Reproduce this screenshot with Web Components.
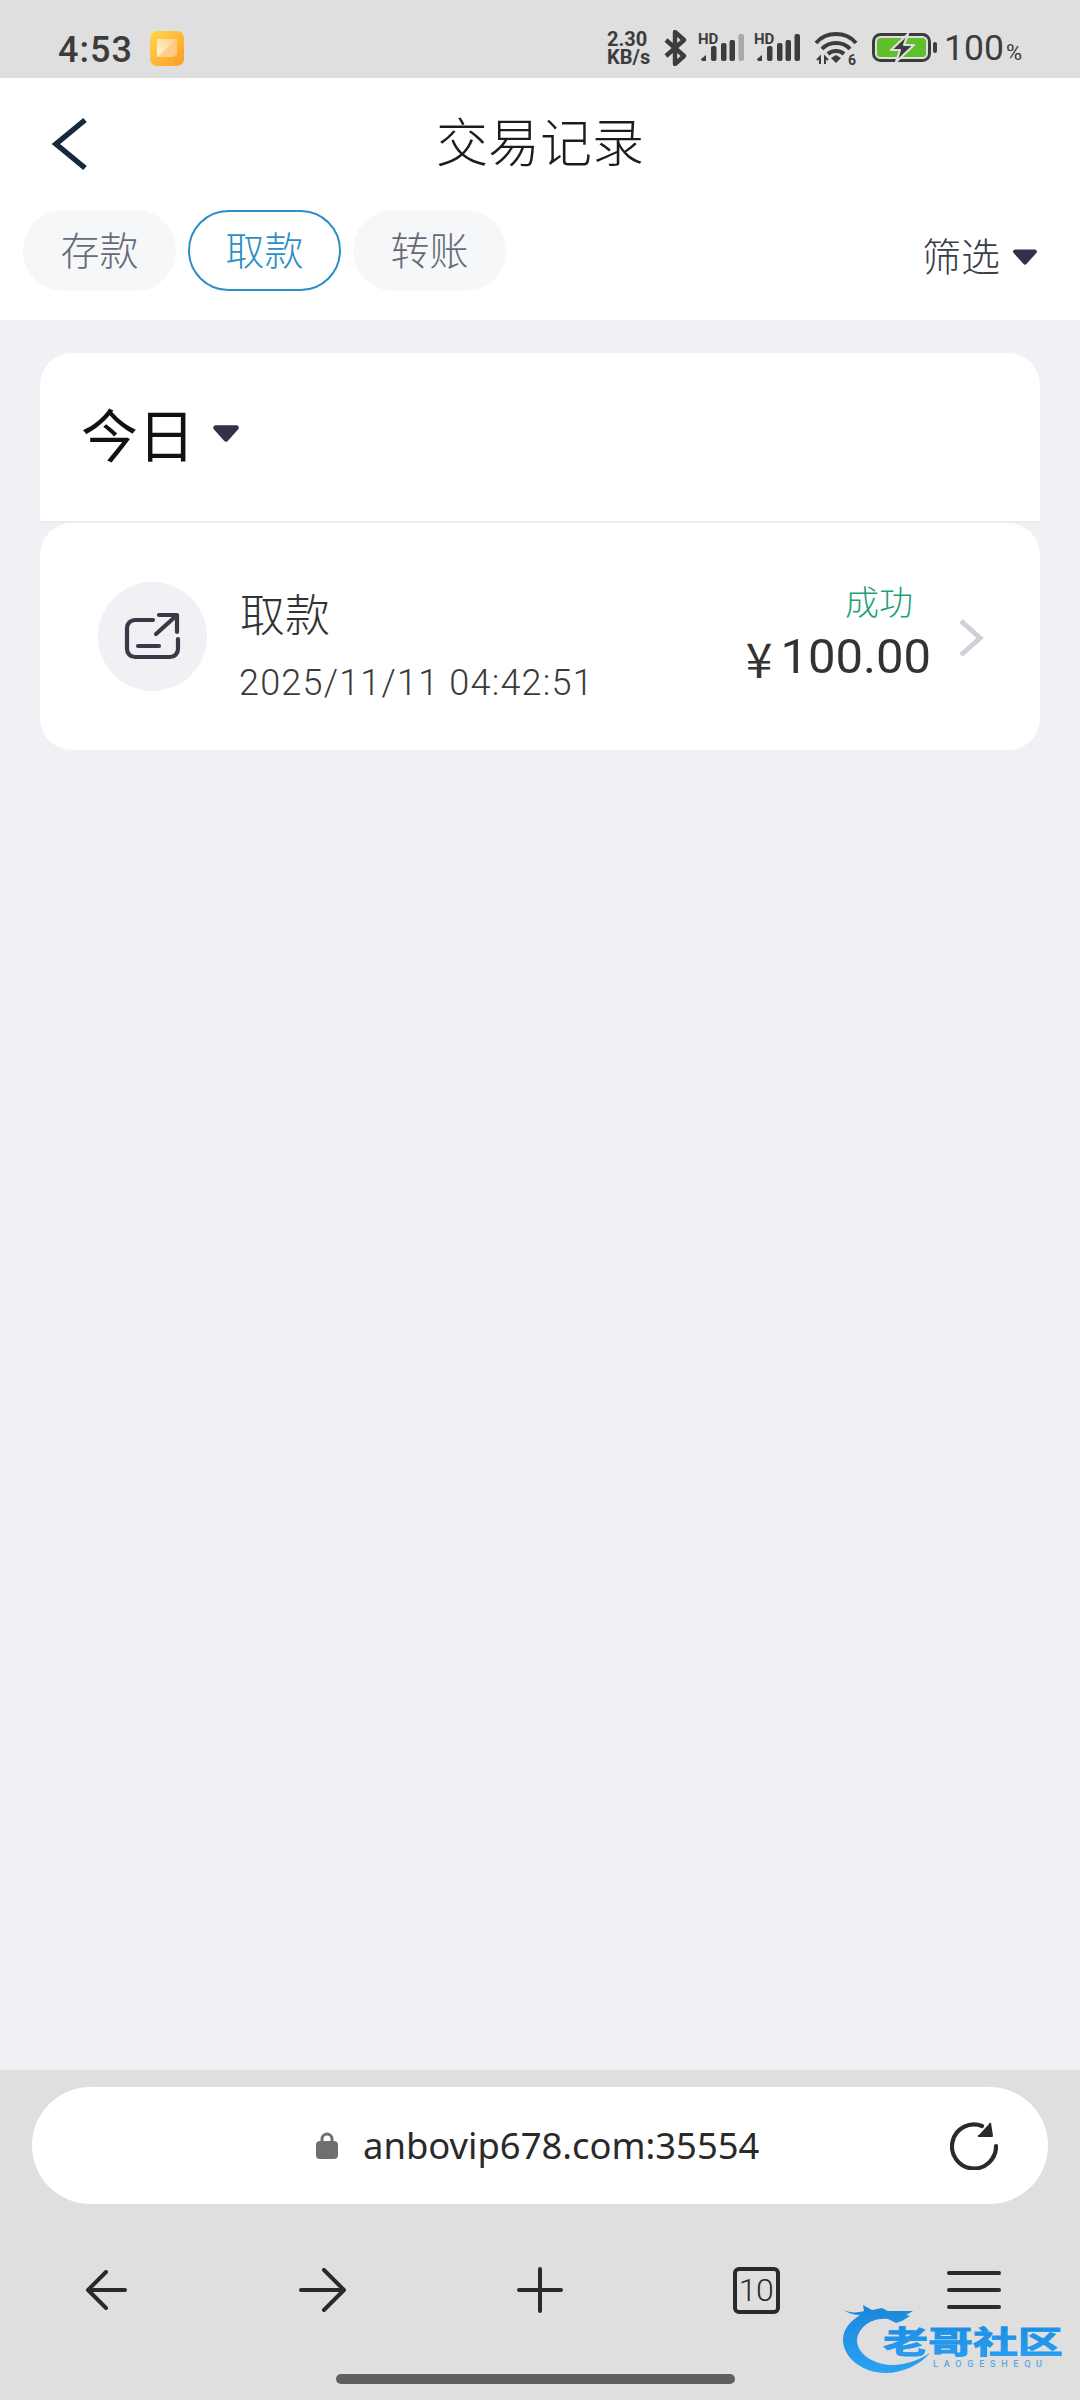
<!doctype html>
<html lang="zh"><head><meta charset="utf-8"><style>
html,body{margin:0;padding:0;background:#f0f0f5}
body{font-family:"Noto Sans CJK SC","Noto Sans",sans-serif}
x-app{display:flex;flex-direction:column;width:1080px;height:2400px;overflow:hidden}
</style></head><body>
<x-app>
  <x-status-bar></x-status-bar>
  <x-title-bar>交易记录</x-title-bar>
  <x-tabs>
    <x-pill>存款</x-pill><x-pill active>取款</x-pill><x-pill>转账</x-pill>
    <x-filter slot="end">筛选</x-filter>
  </x-tabs>
  <x-main>
    <x-day-head>今日</x-day-head>
    <x-txn-row title="取款" date="2025/11/11 04:42:51" status="成功" amount="100.00"></x-txn-row>
  </x-main>
  <x-browser-bar url="anbovip678.com:35554" tabs="10"></x-browser-bar>
</x-app>
<script>
const CJK='"Noto Sans CJK SC","Noto Sans",sans-serif';
const caret=(w,h,c)=>`<svg width="${w}" height="${h}" viewBox="0 0 24 16" style="display:block"><path d="M3 3H21L12 13Z" fill="${c}" stroke="${c}" stroke-width="4" stroke-linejoin="round"/></svg>`;
function el(name,render){customElements.define(name,class extends HTMLElement{
  constructor(){super();const s=this.attachShadow({mode:'open'});s.innerHTML=render(this)}
})}
const signal=(last)=>`<svg width="50" height="34" viewBox="0 0 50 34" style="display:block;overflow:visible">
<text x="3" y="13" font-family="Roboto" font-weight="700" font-size="15" fill="#3c3c3c">HD</text>
<g fill="#3c3c3c"><path d="M6 28L11 24V30H8A2 2 0 0 1 6 28Z"/><rect x="16" y="15" width="5.5" height="15" rx="2"/><rect x="26" y="12" width="5.5" height="18" rx="2"/><rect x="34.500" y="9" width="5.5" height="21" rx="2"/>
<rect x="43.500" y="3" width="5.5" height="27" rx="2" fill="${last}"/></g></svg>`;

el('x-status-bar',()=>`<style>
:host{display:flex;align-items:center;height:78px;background:#dfdfdf;color:#3c3c3c;flex:none;padding:0 58px;font-family:Roboto,sans-serif;box-sizing:border-box}
.time{font-size:36px;font-weight:500;letter-spacing:1px;margin-top:21px;line-height:40px}
.note{margin:19px 0 0 17px}
.r{margin-left:auto;display:flex;align-items:center;margin-top:18px;height:40px}
.sp{display:flex;flex-direction:column;font-size:20px;font-weight:700;line-height:18px;width:50px;margin-right:7px}
.bt{margin-right:7px}.sg1{margin-right:6px}.sg2{margin-right:13px}.wf{margin-right:14px}.bat{margin-right:7px}
.p{font-size:35.5px;line-height:40px}.pc{font-size:22px;margin:9px 0 0 2px}
</style>
<span class="time">4:53</span>
<svg class="note" width="34" height="35" viewBox="0 0 34 35"><defs><linearGradient id="n" x1="0" y1="0" x2="1" y2="1"><stop offset="0" stop-color="#ffd84a"/><stop offset="1" stop-color="#ff9a26"/></linearGradient><linearGradient id="m" x1="0" y1="1" x2="1" y2="0"><stop offset="0" stop-color="#fff6dc"/><stop offset="1" stop-color="#ffd08a"/></linearGradient></defs><rect width="34" height="35" rx="7" fill="url(#n)"/><path d="M7 8H27V23L22 26H7Z" fill="url(#m)"/><path d="M7 26L27 8V23L22 26Z" fill="#ffc36f" opacity=".7"/></svg>
<div class="r">
<div class="sp"><span>2.30</span><span>KB/s</span></div>
<svg class="bt" width="24" height="36" viewBox="0 0 24 36"><path d="M2 10L20 26L11 34V2L20 10L2 26" fill="none" stroke="#3c3c3c" stroke-width="4.4" stroke-linejoin="round"/></svg>
<span class="sg1">${signal('#a9a9a9')}</span>
<span class="sg2">${signal('#3c3c3c')}</span>
<svg class="wf" width="44" height="34" viewBox="0 0 44 34" style="overflow:visible"><g fill="none" stroke="#3c3c3c" stroke-width="4"><path d="M2 12C12 0 32 0 42 12"/><path d="M8 18C15 10 29 10 36 18"/><path d="M14 23C18 19 26 19 30 23"/></g><path d="M17 27L22 24L27 27L22 32Z" fill="#3c3c3c"/><path d="M3 29L6 26V33M11 33V26L14 29" fill="none" stroke="#3c3c3c" stroke-width="2"/><text x="34" y="33.500" font-family="Roboto" font-weight="700" font-size="14" fill="#3c3c3c">6</text></svg>
<svg class="bat" width="65" height="30" viewBox="0 0 65 30"><rect x="1.5" y="1.5" width="56" height="26" rx="7" fill="none" stroke="#3c3c3c" stroke-width="3"/><rect x="5" y="5" width="49" height="19" rx="3.5" fill="#5fc02c"/><rect x="61" y="9" width="4" height="11" rx="2" fill="#3c3c3c"/><path d="M36 1L19 17H28L24 29L42 12H32Z" fill="#3c3c3c" stroke="#dfdfdf" stroke-width="2.2" stroke-linejoin="round"/></svg>
<span class="p">100</span><span class="pc">%</span>
</div>`);

el('x-title-bar',()=>`<style>
:host{display:flex;align-items:center;justify-content:center;height:132px;background:#fff;flex:none;position:relative;font:300 52px/60px ${CJK};color:#1c1c1c;padding-bottom:8px;box-sizing:border-box}
svg{position:absolute;left:51px;top:39px}
</style><svg width="38" height="54" viewBox="0 0 38 54"><path d="M34 3L5 27L34 51" fill="none" stroke="#17293a" stroke-width="5.5"/></svg><slot></slot>`);

el('x-tabs',()=>`<style>
:host{display:flex;flex:none;background:#fff;padding:0 42px 29px 23px;height:110px;box-sizing:border-box;gap:12px}
.e{margin-left:auto;display:flex}
</style><slot></slot><div class="e"><slot name="end"></slot></div>`);

el('x-pill',h=>`<style>
:host{display:flex;align-items:center;justify-content:center;width:153px;height:81px;box-sizing:border-box;border-radius:41px;font:300 39px/1 ${CJK};padding-bottom:5px;
 background:${h.hasAttribute('active')?'#fff':'#f6f7f9'};color:${h.hasAttribute('active')?'#2b8fc6':'#666a78'};${h.hasAttribute('active')?'border:2.5px solid #2b8fc6;':''}}
</style><slot></slot>`);

el('x-filter',()=>`<style>
:host{display:flex;align-items:center;gap:12px;height:81px;padding-top:8px;box-sizing:border-box;font:300 39px/1 ${CJK};color:#3a3d4a}
svg{margin-top:4px}
</style><slot></slot>${caret(26,18,'#30334a')}`);

el('x-main',()=>`<style>
:host{display:flex;flex-direction:column;flex:1;background:#f0f0f5;padding:33px 40px 0;gap:0}
</style><slot></slot>`);

el('x-day-head',()=>`<style>
:host{display:flex;align-items:center;gap:17px;height:170px;box-sizing:border-box;background:#fff;border-radius:32px 32px 0 0;border-bottom:2px solid #ececf0;padding:0 0 10px 41px;font:400 57px/60px ${CJK};color:#111}
svg{margin-top:2px}
</style><slot></slot>${caret(28,19,'#30334a')}`);

el('x-txn-row',h=>{const a=n=>h.getAttribute(n);return `<style>
:host{display:flex;align-items:center;height:227px;box-sizing:border-box;background:#fff;border-radius:32px;padding:0 56px 0 58px}
.ic{width:109px;height:109px;border-radius:50%;background:#f0f0f5;display:flex;align-items:center;justify-content:center;flex:none}
.t{margin-left:32px;display:flex;flex-direction:column;padding-top:17px}
.n{font:300 45px/52px ${CJK};color:#333;margin-left:1px}
.d{font:300 36px/42px Roboto,sans-serif;color:#3a3a3a;margin-top:23px;letter-spacing:1.2px}
.a{margin-left:auto;display:flex;flex-direction:column;align-items:flex-end;margin-top:-7px}
.s{font:300 34px/40px ${CJK};color:#1f9f78;margin-right:18px}
.m{font:400 49px/58px Roboto,sans-serif;color:#333;margin-top:7px;display:flex;align-items:center}
.y{font:400 48px/58px ${CJK};margin-right:8px}
.c{margin-left:27px;flex:none;margin-top:2px}
</style>
<div class="ic"><svg width="57" height="49" viewBox="0 0 57 49"><g fill="none" stroke="#383b47" stroke-width="4.2" stroke-linecap="round" stroke-linejoin="round"><path d="M29 8H11A8 8 0 0 0 3 16V37A8 8 0 0 0 11 45H46A8 8 0 0 0 54 37V27"/><path d="M14 34H35"/><path d="M32 22L52 4"/><path d="M35 3H53V20"/></g></svg></div>
<div class="t"><span class="n">${a('title')}</span><span class="d">${a('date')}</span></div>
<div class="a"><span class="s">${a('status')}</span><span class="m"><span class="y">¥</span>${a('amount')}</span></div>
<svg class="c" width="26" height="40" viewBox="0 0 26 40"><path d="M3 3L22 20L3 37" fill="none" stroke="#cfd0d8" stroke-width="5"/></svg>`});

el('x-browser-bar',h=>`<style>
:host{display:flex;flex-direction:column;height:330px;flex:none;background:#dfdfdf;padding-top:17px;box-sizing:border-box;position:relative;color:#2a2a2a}
.u{display:flex;align-items:center;height:117px;margin:0 32px;background:#fff;border-radius:59px;padding:0 50px 0 284px;font:400 36.4px/44px "Noto Sans",sans-serif;flex:none}
.u span{margin-left:25px;padding-bottom:2px;white-space:nowrap}
.re{margin-left:auto}
.n{display:grid;grid-template-columns:repeat(5,216px);height:100px;margin-top:36px;flex:none}
.n>*{justify-self:center;align-self:center}
.n>:first-child{margin-right:4px}.n>:nth-child(2){margin-right:2px}.n>:last-child{margin-left:3px}
.tb{box-sizing:border-box;width:47px;height:47px;border:4px solid #2a2a2a;border-radius:6px;display:flex;align-items:center;justify-content:center;font:300 32px/1 Roboto,sans-serif;letter-spacing:-.5px}
.h{width:399px;height:10px;border-radius:5px;background:#5f5f5f;margin:34px 0 0 336px;flex:none}
x-logo{position:absolute;left:840px;top:233px}
</style>
<div class="u"><svg width="22" height="27" viewBox="0 0 22 27"><path d="M6 11V7A5 5 0 0 1 16 7V11" fill="none" stroke="#6f6f6f" stroke-width="3"/><rect y="9" width="22" height="18" rx="4" fill="#6f6f6f"/></svg><span>${h.getAttribute('url')}</span>
<svg class="re" width="48" height="48" viewBox="0 0 48 48"><path d="M46 24A22 22 0 1 1 32 4" fill="none" stroke="#2a2a2a" stroke-width="4.2" stroke-linecap="round"/><path d="M40 1L42 14L28 14" fill="#2a2a2a" stroke="#2a2a2a" stroke-width="2" stroke-linejoin="round"/></svg></div>
<div class="n">
<svg width="42" height="40" viewBox="0 0 42 40"><path d="M40 20H3M21 2L3 20L21 38" fill="none" stroke="#2a2a2a" stroke-width="4" stroke-linecap="round" stroke-linejoin="round"/></svg>
<svg width="48" height="44" viewBox="0 0 48 44"><path d="M2 22H45M25 2L45 22L25 42" fill="none" stroke="#2a2a2a" stroke-width="4" stroke-linecap="round" stroke-linejoin="round"/></svg>
<svg width="46" height="46" viewBox="0 0 46 46"><path d="M2 23H44M23 2V44" fill="none" stroke="#2a2a2a" stroke-width="4" stroke-linecap="round"/></svg>
<div class="tb">${h.getAttribute('tabs')}</div>
<svg width="54" height="40" viewBox="0 0 54 40"><path d="M2 3H52M2 20H52M2 37H52" fill="none" stroke="#2a2a2a" stroke-width="4" stroke-linecap="round"/></svg>
</div>
<div class="h"></div>
<x-logo></x-logo>`);

el('x-logo',()=>`<style>:host{display:block;width:226px;height:76px}svg{display:block}</style>
<svg width="226" height="76" viewBox="0 0 226 76"><defs><linearGradient id="g" x1="0" y1="0" x2="0" y2="1"><stop offset="0" stop-color="#1c86d8"/><stop offset="1" stop-color="#2aa3f5"/></linearGradient></defs>
<path d="M3 7C10 10 17 10 24 8L23 2L32 7L42 5L48 8L73 8L66 12L70 13L62 18L56 20L48 16C30 14 18 26 17 37C17 52 36 62 52 62C64 62 78 58 90 50C80 62 62 70 46 70C22 70 3 54 3 37C3 27 9 19 20 12C14 12 8 10 3 7Z" fill="url(#g)"/>
<g transform="translate(43,50) scale(1.45,1)"><text x="0" y="0" font-family="'Noto Sans CJK SC',sans-serif" font-weight="700" font-size="31" fill="url(#g)" stroke="#1f96ee" stroke-width=".9">老哥社区</text></g>
<text x="93" y="64" font-family="Roboto,sans-serif" font-size="9" font-weight="500" textLength="109" fill="#5aa8e0">LAOGESHEQU</text></svg>`);

el('x-app',()=>`<slot></slot>`);
</script>
</body></html>
